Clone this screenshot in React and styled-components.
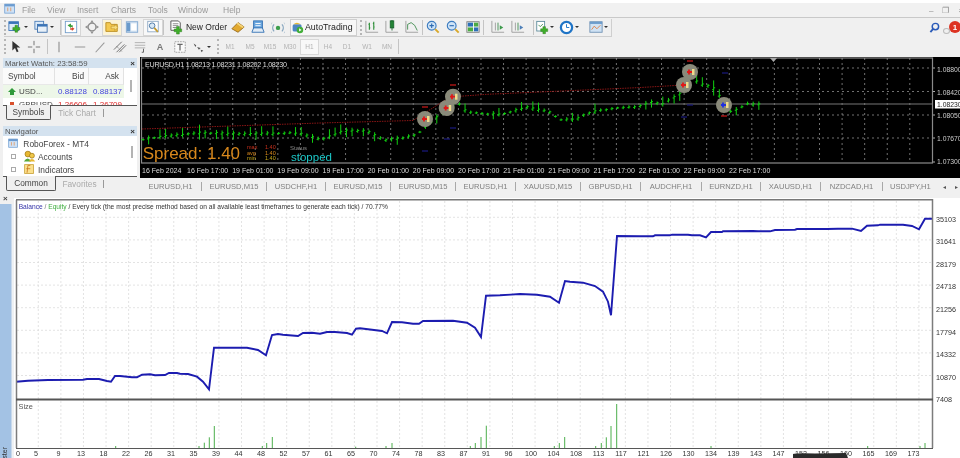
import React from "react";
import styled, { createGlobalStyle } from "styled-components";

const Global = createGlobalStyle`
  html, body { margin: 0; padding: 0; width: 960px; height: 458px; overflow: hidden; background: #f0f0f0; }
  #root { width: 960px; height: 458px; }
  * { box-sizing: border-box; }
`;

const Page = styled.div`
  width: 960px; height: 458px; overflow: hidden; display: flex; flex-direction: column;
  background: #f0f0f0; color: #333; font: 8px "Liberation Sans", Arial, sans-serif;
  filter: blur(0.3px);
`;
const MenuBar = styled.div`
  height: 18px; flex: none; display: flex; align-items: center; position: relative; padding: 2px 0 0 4px;
  background: linear-gradient(#fff 0, #fff 3px, #f1f1f1 3px); border-bottom: 1px solid #c9c9c9;
`;
const MenuItem = styled.span`
  color: #9a9a9a; font-size: 8.5px; width: ${p => p.$w}px; flex: none;
`;
const WinControls = styled.div`
  position: absolute; left: 929px; top: 6px; display: flex; gap: 9px; color: #888; font-size: 8px; white-space: nowrap;
`;
const ToolRow = styled.div`
  height: 19px; flex: none; display: flex; align-items: center; padding-left: ${p => p.$pad}px; position: relative;
`;
const ToolStrip = styled.div`
  display: flex; align-items: center; height: 18px; width: ${p => p.$w}px; flex: none;
  border-bottom: ${p => p.$line ? "1px solid #cfcfcf" : "0"}; border-right: ${p => p.$line ? "1px solid #cfcfcf" : "0"};
`;
const Tool = styled.div`
  width: ${p => p.$w || 20}px; height: 17px; flex: none; display: flex; align-items: center; justify-content: center;
  background: ${p => p.$on === "y" ? "#fbf3d6" : p.$on ? "#f8f8f8" : "transparent"};
  border: ${p => p.$on ? "1px solid #d6d6d6" : "0"};
`;
const Caret = styled.div`
  width: ${p => p.$w || 7}px; flex: none; display: flex; justify-content: center;
  &::after { content: ""; border: 2px solid transparent; border-top: 2.5px solid #333; margin-top: 2px; }
`;
const Gap = styled.div` width: ${p => p.$w}px; flex: none; `;
const Sep = styled.div` width: 1px; height: 15px; background: #c4c4c4; flex: none; `;
const Grip = styled.div` width: 2px; height: 15px; flex: none; border-left: 2px dotted #b5b5b5; `;
const OrderBtn = styled.div`
  width: 64px; flex: none; display: flex; align-items: center; gap: 2px; padding-left: 5px;
  color: #222; font-size: 8.5px; white-space: nowrap;
`;
const AutoBtn = styled.div`
  width: 67px; height: 17px; flex: none; display: flex; align-items: center; gap: 1px; padding-left: 0;
  background: #f7f7f7; border: 1px solid #cfcfcf; color: #222; font-size: 8.8px; white-space: nowrap;
`;
const Period = styled.div`
  width: ${p => p.$w || 20}px; height: 16px; flex: none; display: flex; align-items: center; justify-content: center;
  color: #b2b2b2; font-size: 6.5px; border: ${p => p.$box ? "1px solid #d8d8d8" : "0"}; background: ${p => p.$box ? "#f8f8f8" : "transparent"};
`;
const RightIcons = styled.div`
  position: absolute; right: 0; top: 1px; width: 34px; height: 17px;
`;
const Badge = styled.div`
  position: absolute; right: -1px; top: 2px; width: 12px; height: 12px; border-radius: 50%; background: #dd3322;
  color: #fff; font-size: 8px; font-weight: bold; display: flex; align-items: center; justify-content: center;
`;
const Bubble = styled.div`
  position: absolute; left: 17px; top: 9px; width: 7px; height: 6px; border: 1px solid #bbb; border-radius: 50%;
`;
const SearchIcon = styled.div` position: absolute; left: 3px; top: 3px; `;
const Work = styled.div` height: 136px; flex: none; display: flex; `;
const Sidebar = styled.div` width: 140px; flex: none; padding: 1px 3px 0; display: flex; flex-direction: column; gap: 3px; `;
const Panel = styled.div` display: flex; flex-direction: column; height: ${p => p.$h}px; flex: none; `;
const PanelHead = styled.div`
  height: 10px; flex: none; margin-top: 1px; display: flex; justify-content: space-between; align-items: center; padding: 0 2px;
  background: #d4e2ef; color: #555; font-size: 7.8px;
  & b { color: #333; font-size: 8px; }
`;
const WatchBody = styled.div`
  height: 37px; flex: none; background: #fff; overflow: hidden; display: grid; grid-template-columns: 52px 34px 35px 13px;
  grid-template-rows: 17px 13px 13px;
`;
const HeadCell = styled.div`
  background: #fafafa; border-right: ${p => p.$last ? "0" : "1px solid #e2e2e2"}; border-bottom: 1px solid #e8e8e8; color: #444; font-size: 8.3px;
  display: flex; align-items: center; justify-content: ${p => p.$left ? "flex-start" : "flex-end"}; padding: ${p => p.$left ? "0 0 0 5px" : "0 4px 0 0"};
`;
const Cell = styled.div`
  background: ${p => p.$bg || "#fff"}; color: ${p => p.$c || "#444"}; font-size: 8px;
  display: flex; align-items: center; gap: 3px; justify-content: ${p => p.$left ? "flex-start" : "flex-end"}; padding: ${p => p.$left ? "0 0 0 5px" : "0 2px 0 0"};
`;
const Scroll = styled.div`
  grid-column: 4; grid-row: 1 / 4; background: #fff; display: flex; justify-content: center; padding-top: ${p => p.$top}px;
  &::after { content: ""; width: 2px; height: 12px; background: #b3b3b3; }
`;
const TabRow = styled.div`
  height: 15px; flex: none; display: flex; align-items: stretch; border-top: 1px solid #555; padding-left: 3px; color: #a0a0a0; font-size: 8.3px;
`;
const SideTab = styled.div`
  width: ${p => p.$w}px; flex: none; display: flex; align-items: center; justify-content: center;
  color: ${p => p.$on ? "#444" : "#aaa"}; background: #f0f0f0;
  ${p => p.$on ? "border: 1px solid #555; border-top: 0; margin-top: -1px; border-radius: 0 0 2px 2px;" : ""}
`;
const TabSep = styled.div` width: 1px; height: 8px; background: #999; align-self: center; flex: none; `;
const NavBody = styled.div` height: 40px; flex: none; background: #fff; position: relative; overflow: hidden; padding: 1px 0 0 2px; `;
const TreeRow = styled.div`
  height: 13px; display: flex; align-items: center; gap: 2px; padding-left: ${p => p.$in}px; color: #444; font-size: 8.4px; white-space: nowrap;
`;
const Plus = styled.div`
  width: 5px; height: 5px; border: 1px solid #aaa; flex: none; margin-right: 5px;
`;
const NavScroll = styled.div`
  position: absolute; right: 4px; top: 10px; width: 2px; height: 12px; background: #b3b3b3;
`;
const ChartCol = styled.div` width: 820px; flex: none; padding-top: 1px; display: flex; flex-direction: column; `;
const Plot = styled.svg` width: 820px; height: 121px; display: block; flex: none; background: #000; margin-left: 0; `;
const TabBar = styled.div`
  height: 12px; margin-top: 2px; flex: none; display: flex; align-items: center; color: #808080; font-size: 7.6px; position: relative; white-space: nowrap;
`;
const SymTab = styled.div`
  width: ${p => p.$w}px; flex: none; text-align: center; border-right: 1px solid #a8a8a8; line-height: 9px; height: 9px;
`;
const Arrows = styled.div` margin-left: 12px; display: flex; gap: 9px; color: #555; font-size: 6px; `;
const Tester = styled.div` height: 266px; flex: none; display: flex; background: #f0f0f0; `;
const Strip = styled.div`
  width: 14px; flex: none; position: relative; overflow: hidden;
  background: linear-gradient(90deg, #a3c2e4 0 11px, #eef1f4 12px);
`;
const StripClose = styled.div`
  height: 12px; background: #f0f0f0; color: #444; font-size: 8px; font-weight: bold; padding: 2px 0 0 3px;
`;
const StripLabel = styled.div`
  position: absolute; left: 1px; bottom: -8px; writing-mode: vertical-rl; transform: rotate(180deg); color: #333; font-size: 7px;
`;
const Graph = styled.svg` width: 946px; height: 266px; display: block; flex: none; `;
const Tx = styled.text`
  font-family: "Liberation Sans", Arial, sans-serif; font-size: ${p => p.$s || 7.4}px; fill: ${p => p.$c || "#333"};
`;

const I = ({ children, s = 14 }) => <svg width={s} height={s} viewBox="0 0 16 16">{children}</svg>;
const PlusG = ({ x = 8, y = 8 }) => <path d={`M${x + 2} ${y}h3v2.500h2.500v3h-2.500v2.500h-3v-2.500h-2.500v-3h2.500z`} fill="#3fae2a" stroke="#2b7d1c" strokeWidth=".5" />;
const NewChart = () => <I><rect x="1" y="2" width="11" height="10" fill="#dceaf8" stroke="#3a74b8" /><rect x="1" y="2" width="11" height="2.500" fill="#3a74b8" /><PlusG x={6} y={6} /></I>;
const Profiles = () => <I><rect x="1" y="1.500" width="10" height="9" fill="#dceaf8" stroke="#4a7cb8" /><rect x="4" y="5" width="11" height="9" fill="#e8f0f8" stroke="#3a6ca8" /><rect x="4" y="5" width="11" height="2.500" fill="#3a74b8" /></I>;
const Market = () => <I><rect x="1.500" y="1.500" width="13" height="13" fill="#fff" stroke="#6f9bc8" /><path d="M4 6l4-2v2h2v2H8v1z" fill="#3a9e3a" /><path d="M12 10l-3 2.500v-1.500H7V9.500h2V8z" fill="#d8452c" /></I>;
const DataWin = () => <I><circle cx="8" cy="8" r="4.500" fill="none" stroke="#8a8a8a" strokeWidth="1.500" /><path d="M8 0l2 3H6zM8 16l2-3H6zM0 8l3-2v4zM16 8l-3-2v4z" fill="#8f8f8f" /></I>;
const Folder = () => <I><path d="M1 3h5l1 2h7v8H1z" fill="#f4c94f" stroke="#b88a1e" /><path d="M7 7h4V5l4 3.500L11 12v-2H7z" fill="#f7dd7e" stroke="#b88a1e" strokeWidth=".6" /></I>;
const Term = () => <I><rect x="1.500" y="2" width="13" height="12" fill="#d8e6f4" stroke="#7fa6cf" /><rect x="2" y="3" width="4" height="10" fill="#6a9acb" /><rect x="7" y="4" width="6" height="8" fill="#fff" /></I>;
const TesterIc = () => <I><rect x="2" y="1.500" width="12" height="12" fill="#fff" stroke="#8aa6c2" /><circle cx="7" cy="6.500" r="3.200" fill="#d8e8f6" stroke="#3e6e9e" /><path d="M9.500 9l4 4.500" stroke="#c49a2a" strokeWidth="2" /></I>;
const OrderIc = () => <I s={15}><path d="M2 1h8l2 2v8H2z" fill="#fff" stroke="#555" /><path d="M4 4h6M4 6h6M4 8h4" stroke="#888" /><PlusG x={6} y={7} /></I>;
const Gold = () => <I><path d="M1 10l7-7 7 5-7 6z" fill="#e2a92f" stroke="#96691a" /><path d="M8 3l7 5-2 1-7-5z" fill="#f4d57a" /></I>;
const Book = () => <I><rect x="3" y="1" width="10" height="9" fill="#6aa6de" stroke="#2f6eb2" /><path d="M1 14l2-5h10l2 5z" fill="#e2ecf6" stroke="#2f6eb2" /><path d="M5 4h6M5 6.500h6" stroke="#fff" /></I>;
const Signal = () => <I><circle cx="8" cy="9" r="2.500" fill="#3c9e4c" /><path d="M3.500 5a6 6 0 0 0 0 8M12.500 5a6 6 0 0 1 0 8" stroke="#8aa8c0" fill="none" strokeWidth="1.500" /><path d="M1 3a9 9 0 0 0 0 12M15 3a9 9 0 0 1 0 12" stroke="#b9c9d6" fill="none" /></I>;
const Robot = () => <I s={13}><rect x="2" y="4" width="11" height="9" rx="2" fill="#4c86c2" /><path d="M3 4q4-4 9 0z" fill="#e8b832" /><circle cx="11" cy="11" r="4" fill="#41ad38" /><path d="M10 9l3 2-3 2z" fill="#fff" /></I>;
const Bars = ({ c = "#2f8f3a" }) => <I><path d="M1 1v13h14" stroke="#999" fill="none" /><path d="M5 3v8M4 5h1M5 9h1M10 2v9M9 4h1M10 8h1" stroke={c} strokeWidth="1.300" fill="none" /></I>;
const Candle = () => <I><path d="M1 1v13h14" stroke="#999" fill="none" /><rect x="6" y="1" width="4" height="8" fill="#2e9e3e" stroke="#15602a" /><path d="M8 0v12" stroke="#15602a" /></I>;
const LineIc = () => <I><path d="M1 1v13h14" stroke="#999" fill="none" /><path d="M3 11V5l4-2 4 3 3 6" stroke="#3d8a4c" fill="none" /></I>;
const Zoom = ({ plus }) => <I><circle cx="6.500" cy="6.500" r="5" fill="#cfe4f7" stroke="#3c7cc0" strokeWidth="1.300" /><path d={plus ? "M4 6.500h5M6.500 4v5" : "M4 6.500h5"} stroke="#2d6cb4" strokeWidth="1.300" /><path d="M10.500 10.500l4 4" stroke="#d8a92c" strokeWidth="2.200" /></I>;
const Tile = () => <I><rect x="1" y="2" width="14" height="12" fill="#fff" stroke="#777" /><rect x="2" y="3" width="6" height="4.500" fill="#2c6fb6" /><rect x="9" y="3" width="5" height="4.500" fill="#4caa44" /><rect x="2" y="8.500" width="6" height="4.500" fill="#4caa44" /><rect x="9" y="8.500" width="5" height="4.500" fill="#2c6fb6" /></I>;
const Shift = ({ two }) => <I><path d="M1 1v13h14M5 3v9" stroke="#999" fill="none" /><path d="M8 3v9" stroke="#3d8a4c" /><path d="M10 6l4 2.500-4 2.500z" fill={two ? "#4d7fb8" : "#3d9a4c"} /></I>;
const AddInd = () => <I s={15}><rect x="2" y="1" width="9" height="11" fill="#fff" stroke="#5a8a9a" /><path d="M4 5l2 2 3-3" stroke="#3d8a4c" fill="none" /><PlusG x={7} y={7} /></I>;
const Clock = () => <I s={15}><circle cx="8" cy="8" r="6" fill="#fff" stroke="#1f74c6" strokeWidth="2.400" /><path d="M8 4.500V8h3" stroke="#1f74c6" fill="none" /></I>;
const Templ = () => <I><rect x="1" y="2" width="14" height="12" fill="#cfe2f4" stroke="#6c8fb2" /><rect x="1" y="2" width="14" height="2.500" fill="#6c9ccc" /><path d="M3 11l3-4 3 3 4-4" stroke="#e07a3c" fill="none" /></I>;
const Arrow = () => <I><path d="M5 1v11l3-3 2 5 2-1-2-4.500h4z" fill="#333" /></I>;
const Cross = () => <I><path d="M8 1v5M8 10v5M1 8h5M10 8h5" stroke="#666" /></I>;
const VLine = () => <I><path d="M8 2v12" stroke="#888" strokeWidth="1.200" /></I>;
const HLine = () => <I><path d="M2 8h12" stroke="#999" strokeWidth="1.200" /></I>;
const Trend = () => <I><path d="M3 14L13 3" stroke="#999" strokeWidth="1.200" /></I>;
const Channel = () => <I><path d="M1 11l9-9M4 14l9-9M7 14l8-8" stroke="#666" /><path d="M4 7l6 6" stroke="#666" strokeDasharray="1 1" /></I>;
const Fibo = () => <I><path d="M2 3h12M2 6h12M2 9h12" stroke="#aaa" /><path d="M12 10v4h-2" stroke="#555" fill="none" /></I>;
const AIcon = () => <span style={{ color: "#777", fontWeight: 700, fontSize: 9 }}>A</span>;
const TIcon = () => <I><rect x="2" y="2" width="12" height="12" fill="#fafafa" stroke="#999" strokeDasharray="2 1" /><path d="M5 5h6M8 5v7" stroke="#666" strokeWidth="1.400" /></I>;
const MoreArrows = () => <I><path d="M3 4l3 2-1 2zM7 8l4 1-2 2zM11 11l3 1-2 2z" fill="#555" /></I>;
const AppIcon = ({ s = 11 }) => <I s={s}><rect x="1" y="1.500" width="13" height="12" fill="#cfe2f6" stroke="#6b9bd0" /><rect x="1" y="1.500" width="13" height="3" fill="#6b9bd0" /><path d="M5 6v5M9 6v5" stroke="#e08a4a" /></I>;
const Acct = () => <I s={13}><circle cx="6" cy="5" r="3.500" fill="#e8b832" stroke="#a87f1a" /><path d="M1 14q5-7 9 0z" fill="#58a83a" /><circle cx="11" cy="7" r="3" fill="#f0c84a" stroke="#a87f1a" /><path d="M7 14q4-6 8 0z" fill="#e8b832" /></I>;
const Indic = () => <I s={13}><rect x="2" y="2" width="11" height="11" fill="#fbe08c" stroke="#c9a23a" /><path d="M9 3H6l-1 9M4 7h5" stroke="#c9781e" fill="none" /></I>;

const timeLabels = ["16 Feb 17:00","19 Feb 01:00","19 Feb 09:00","19 Feb 17:00","20 Feb 01:00","20 Feb 09:00","20 Feb 17:00","21 Feb 01:00","21 Feb 09:00","21 Feb 17:00","22 Feb 01:00","22 Feb 09:00","22 Feb 17:00"];
const key = [[141,140],[165,136],[200,133],[240,134],[300,133],[320,140],[343,131],[367,131],[377,137],[385,140],[403,138],[418,134],[425,127],[435,119],[447,109],[453,100],[458,103],[467,112],[487,114],[503,114],[527,107],[550,112],[560,120],[577,119],[587,113],[603,110],[617,108],[637,107],[653,102],[663,104],[673,98],[683,92],[690,75],[700,84],[710,86],[718,92],[723,105],[730,112],[737,110],[747,104],[763,105]];
const levelAt = x => {
  for (let i = 1; i < key.length; i++) if (x <= key[i][0]) {
    const [a, b] = key[i - 1], [c, d] = key[i];
    return b + (d - b) * (x - a) / (c - a);
  }
  return 105;
};
const candles = [];
for (let x = 143, i = 0; x < 764; x += 5.65, i++) {
  const n = Math.sin(i * 12.9898) * 43758.5453, r = n - Math.floor(n);
  const n2 = Math.sin(i * 78.233) * 12543.123, r2 = n2 - Math.floor(n2);
  const y = levelAt(x), h = 1 + r * 2.5;
  candles.push({ x, t: y - h - (r2 > .7 ? 5 : 0), b: y + 1 + r2 * 2 + (r > .75 ? 4 : 0), o: y + r2, c: y - r });
}

const markers = [[425,119,"#e01818"],[446.700,108,"#e01818"],[453,96.700,"#e01818"],[690,72,"#e01818"],[684,85,"#e01818"],[724,105,"#1f2fe0"]];
const redDash = [[425,107],[453,85],[690,61],[724,116]];
const blueDash = [[425,151],[447,139],[453,128],[690,105],[684,117],[725,73]];
const vGrid = Array.from({ length: 34 }, (_, i) => 165 + 22.57 * i);

const ChartPlot = () => (
  <Plot viewBox="140 57 820 121">
    <rect x="141.500" y="58" width="791" height="105" fill="none" stroke="#8a8a8a" strokeWidth="1.200" />
    <g stroke="#bdbdbd" strokeDasharray="2 3" strokeWidth=".8" opacity=".75">
      {vGrid.map(x => <path key={x} d={`M${x} 58V163`} />)}
      {[68, 91.500, 115, 138].map(y => <path key={y} d={`M142 ${y}H932`} />)}
    </g>
    <path d="M142 104H932" stroke="#777" strokeWidth="1.200" />
    <path d="M142 129L320 123L413 120.500L450 97L487 94.300L637 87.700L684 85" fill="none" stroke="#8a1515" strokeDasharray="1.500 1" />
    <g stroke="#10d010" strokeWidth="1" fill="none">
      {candles.map(c => <path key={c.x} d={`M${c.x} ${c.t}V${c.b}M${c.x - 1.500} ${c.o}H${c.x}M${c.x} ${c.c}H${c.x + 1.500}`} />)}
    </g>
    {redDash.map(([x, y]) => <path key={x} d={`M${x - 3} ${y}h6`} stroke="#d01818" strokeWidth="1.200" />)}
    {blueDash.map(([x, y]) => <path key={x + "b"} d={`M${x - 3} ${y}h6`} stroke="#1a1a80" strokeWidth="1.200" />)}
    {markers.map(([x, y, c]) => (
      <g key={x}>
        <circle cx={x} cy={y} r="8" fill="#8a8a7a" />
        <path d={`M${x - 3} ${y}h5M${x - 1} ${y - 2.500}v5`} stroke={c} strokeWidth="1.800" />
        <rect x={x + 2} y={y - 3} width="2.500" height="6" fill="#efdc8c" />
      </g>
    ))}
    <path d="M770 58h7l-3.500 4z" fill="#aaa" />
    <Tx x="145" y="66.500" $c="#ddd" $s={7.2} textLength="142">EURUSD,H1  1.08213 1.08231 1.08202 1.08230</Tx>
    <Tx x="142.700" y="159" $c="#d8881c" $s={17}>Spread: 1.40</Tx>
    <Tx x="247" y="149" $c="#c8301c" $s={5.500}>max</Tx><Tx x="265" y="149" $c="#c8301c" $s={5.500}>1.40</Tx>
    <Tx x="247" y="154.500" $c="#d8881c" $s={5.500}>avg</Tx><Tx x="265" y="154.500" $c="#d8881c" $s={5.500}>1.40</Tx>
    <Tx x="247" y="160" $c="#c8a81c" $s={5.500}>min</Tx><Tx x="265" y="160" $c="#c8a81c" $s={5.500}>1.40</Tx>
    <Tx x="290" y="149.500" $c="#888" $s={6}>Status</Tx>
    <Tx x="291" y="161" $c="#1cc8c8" $s={11.500}>stopped</Tx>
    <Tx x="142" y="172.500" $c="#ddd" $s={7}>16 Feb 2024</Tx>
    {timeLabels.map((t, i) => <Tx key={t} x={187 + 45.17 * i} y="172.500" $c="#ddd" $s={7}>{t}</Tx>)}
    {[68, 91.500, 115, 138, 162].map(y => <path key={y} d={`M933 ${y}h2`} stroke="#aaa" />)}
    <Tx x="937" y="71.500" $c="#ccc" $s={6.800}>1.08800</Tx>
    <Tx x="937" y="94.500" $c="#ccc" $s={6.800}>1.08420</Tx>
    <rect x="935" y="100" width="25" height="8.500" fill="#fff" />
    <Tx x="937" y="107" $c="#222" $s={6.800}>1.08230</Tx>
    <Tx x="937" y="117.500" $c="#ccc" $s={6.800}>1.08050</Tx>
    <Tx x="937" y="141" $c="#ccc" $s={6.800}>1.07670</Tx>
    <Tx x="937" y="164" $c="#ccc" $s={6.800}>1.07300</Tx>
  </Plot>
);

const curve = "16,381.700 28,380.700 48,380 83,379.700 87,379 99,379 107,381 111,381.700 115,376 120,376 132,377.300 137,377.300 142,374.700 150,374.300 155,375.300 165,375 169,373 177,373 180,373.700 188,374 197,376.700 203,381.700 209,389.300 214,347.700 247,347.700 258,350 266,355.300 272,335 278,334 283,334.700 298,336 303,333 312,332.700 320,333.700 327,332 335,332 347,333 352,334.700 356,328.700 360,328.300 382,331 387,333.300 392,322 402,322.300 413,323.700 419,323.700 423,321 453,320.700 467,322.700 475,327.700 481,337 486,295.700 500,295.300 520,294 537,294.700 550,296.700 559,302.700 565,281 570,281.700 583,282.700 595,286 603,291.700 608,301.700 611,315.300 617,236 640,236.300 653,236.300 655,235.300 670,235.300 672,234.700 688,234.700 692,235.300 700,235.300 706,237.300 711,232 722,232 723,231.300 753,231 758,231.300 770,231.300 775,230 795,229.700 797,229 820,229 827,229 838,228.700 852,228.700 861,231 867,225.700 878,225.300 880,224.700 903,224.700 912,226 919,229.300 925,218.700 932,218.700";
const bars = [[115.700,446],[199,446],[204.300,442.700],[209.300,437.300],[214.300,426],[262.300,446],[266.700,443],[272.300,437],[355.700,446.700],[386,446],[392,443],[470.300,446],[475.300,443],[481,437],[486.300,425.700],[554.300,446],[559.300,443],[564.700,437],[595.700,446],[601.300,443],[606.300,437.300],[611,426],[616.700,404],[711,446],[867.700,446],[920,446],[925,443]];
const xLabels = "0 5 9 13 18 22 26 31 35 39 44 48 52 57 61 65 70 74 78 83 87 91 96 100 104 108 113 117 121 126 130 134 139 143 147 152 156 160 165 169 173".split(" ");
const yLabels = ["35103","31641","28179","24718","21256","17794","14332","10870","7408"];

const TesterGraph = () => (
  <Graph viewBox="14 192 946 266">
    <rect x="14" y="198" width="946" height="260" fill="#fff" />
    <rect x="14" y="192" width="946" height="6" fill="#f0f0f0" />
    <g stroke="#dcdcdc" strokeDasharray="2 2" strokeWidth=".8">
      {Array.from({ length: 40 }, (_, i) => 38.300 + 22.58 * i).map(x => <path key={x} d={`M${x} 201V448`} />)}
      {Array.from({ length: 8 }, (_, i) => 217.300 + 22.6 * i).map(y => <path key={y} d={`M17 ${y}H932`} />)}
    </g>
    <polyline points={curve} fill="none" stroke="#1c1cb0" strokeWidth="1.900" />
    <g strokeWidth="1" stroke="#4cae4c">
      {bars.map(([x, y]) => <path key={x} d={`M${x} ${y}V448`} />)}
    </g>
    <path d="M16.500 200V448M932.500 199V448" stroke="#7c7c7c" strokeWidth="1.500" fill="none" />
    <path d="M16 199.800H933" stroke="#777" strokeWidth="1.500" />
    <path d="M16 399.500H933" stroke="#555" strokeWidth="2.200" />
    <path d="M16 448.500H933" stroke="#444" strokeWidth=".9" />
    <Tx x="18.700" y="208.500" $s={6.650}>
      <tspan fill="#3232a8">Balance</tspan><tspan fill="#777"> / </tspan><tspan fill="#3fae3f">Equity</tspan><tspan> / Every tick (the most precise method based on all available least timeframes to generate each tick) / 70.77%</tspan>
    </Tx>
    <Tx x="18.500" y="409" $c="#555">Size</Tx>
    {yLabels.map((t, i) => <Tx key={t} x="936" y={221.500 + 22.6 * i} $c="#333" $s={7.200}>{t}</Tx>)}
    {xLabels.map((t, i) => <Tx key={t} x={i === 0 ? 18 : 13.500 + 22.5 * i} y="456" textAnchor="middle" $c="#333" $s={7.200}>{t}</Tx>)}
    <path d="M793 458V454Q795 453 815 453.500L846 453L848 458z" fill="#2a2a2a" />
  </Graph>
);

const tabs = [["EURUSD,H1",62],["EURUSD,M15",65],["USDCHF,H1",59],["EURUSD,M15",65],["EURUSD,M15",65],["EURUSD,H1",60],["XAUUSD,M15",65],["GBPUSD,H1",60],["AUDCHF,H1",61],["EURNZD,H1",59],["XAUUSD,H1",60],["NZDCAD,H1",62]];

export default function App() {
  return (
    <Page>
      <Global />
      <MenuBar>
        <MenuItem $w={18}><AppIcon s={12} /></MenuItem>
        <MenuItem $w={25}>File</MenuItem><MenuItem $w={30}>View</MenuItem><MenuItem $w={34}>Insert</MenuItem>
        <MenuItem $w={37}>Charts</MenuItem><MenuItem $w={30}>Tools</MenuItem><MenuItem $w={45}>Window</MenuItem><MenuItem $w={30}>Help</MenuItem>
        <WinControls><span>–</span><span>❐</span><span>×</span></WinControls>
      </MenuBar>
      <ToolRow $pad={4}>
        <ToolStrip $w={608} $line>
          <Grip /><Gap $w={2} />
          <Tool $w={14}><NewChart /></Tool><Caret />
          <Gap $w={5} />
          <Tool $w={14}><Profiles /></Tool><Caret />
          <Gap $w={5} /><Sep />
          <Tool $w={20.400} $on><Market /></Tool>
          <Tool $w={20.400}><DataWin /></Tool>
          <Tool $w={20.400} $on="y"><Folder /></Tool>
          <Tool $w={20.400}><Term /></Tool>
          <Tool $w={20.400} $on><TesterIc /></Tool>
          <Sep />
          <OrderBtn><OrderIc />New Order</OrderBtn>
          <Tool><Gold /></Tool><Tool><Book /></Tool><Tool><Signal /></Tool>
          <Gap $w={2} />
          <AutoBtn><Robot />AutoTrading</AutoBtn>
          <Gap $w={3} /><Grip />
          <Tool><Bars /></Tool><Tool><Candle /></Tool><Tool><LineIc /></Tool>
          <Sep />
          <Tool><Zoom plus /></Tool><Tool><Zoom /></Tool><Tool><Tile /></Tool>
          <Sep />
          <Gap $w={4} /><Tool><Shift /></Tool><Tool><Shift two /></Tool>
          <Gap $w={5} /><Sep />
          <Gap $w={1} />
          <Tool $w={14}><AddInd /></Tool><Caret $w={6} />
          <Gap $w={4} />
          <Tool $w={15}><Clock /></Tool><Caret />
          <Gap $w={8} />
          <Tool $w={14}><Templ /></Tool><Caret />
        </ToolStrip>
        <RightIcons>
          <SearchIcon><svg width="11" height="11" viewBox="0 0 12 12"><circle cx="7" cy="5" r="3.500" fill="none" stroke="#2a5ab8" strokeWidth="1.600" /><path d="M4.500 7.500L1.500 11" stroke="#2a5ab8" strokeWidth="2" /></svg></SearchIcon>
          <Bubble />
          <Badge>1</Badge>
        </RightIcons>
      </ToolRow>
      <ToolRow $pad={4}>
        <Grip />
        <Tool $w={18}><Arrow /></Tool>
        <Tool><Cross /></Tool>
        <Gap $w={3} /><Sep />
        <Tool $w={22}><VLine /></Tool><Tool><HLine /></Tool><Tool><Trend /></Tool><Tool><Channel /></Tool><Tool><Fibo /></Tool>
        <Tool><AIcon /></Tool><Tool><TIcon /></Tool><Tool $w={16}><MoreArrows /></Tool><Caret $w={6} />
        <Gap $w={5} /><Grip /><Gap $w={1} />
        <Period>M1</Period><Period>M5</Period><Period>M15</Period><Period>M30</Period>
        <Period $w={19} $box>H1</Period>
        <Period $w={18}>H4</Period><Period>D1</Period><Period>W1</Period><Period>MN</Period>
        <Gap $w={1} /><Sep />
      </ToolRow>
      <Work>
        <Sidebar>
          <Panel $h={65}>
            <PanelHead><span>Market Watch: 23:58:59</span><b>×</b></PanelHead>
            <WatchBody>
              <HeadCell $left>Symbol</HeadCell><HeadCell>Bid</HeadCell><HeadCell>Ask</HeadCell>
              <Scroll $top={12} />
              <Cell $left $bg="#edf7e8"><svg width="8" height="8" viewBox="0 0 8 8"><path d="M4 0l4 4H6v3H2V4H0z" fill="#2f9a3a" /></svg>USD...</Cell>
              <Cell $bg="#edf7e8" $c="#4444dd">0.88128</Cell><Cell $bg="#edf7e8" $c="#4444dd">0.88137</Cell>
              <Cell $left><svg width="8" height="8" viewBox="0 0 8 8"><path d="M4 8l4-4H6V1H2v3H0z" fill="#d8502c" /></svg>GBPUSD</Cell>
              <Cell $c="#e02a2a">1.26606</Cell><Cell $c="#e02a2a">1.26709</Cell>
            </WatchBody>
            <TabRow>
              <SideTab $on $w={45}>Symbols</SideTab>
              <SideTab $w={52}>Tick Chart</SideTab><TabSep />
            </TabRow>
          </Panel>
          <Panel $h={68}>
            <PanelHead><span>Navigator</span><b>×</b></PanelHead>
            <NavBody>
              <TreeRow $in={3}><AppIcon /><span>&nbsp;RoboForex - MT4</span></TreeRow>
              <TreeRow $in={6}><Plus /><Acct /><span>Accounts</span></TreeRow>
              <TreeRow $in={6}><Plus /><Indic /><span>Indicators</span></TreeRow>
              <NavScroll />
            </NavBody>
            <TabRow>
              <SideTab $on $w={50}>Common</SideTab>
              <SideTab $w={47}>Favorites</SideTab><TabSep />
            </TabRow>
          </Panel>
        </Sidebar>
        <ChartCol>
          <ChartPlot />
          <TabBar>
            {tabs.map(([t, w], i) => <SymTab key={i} $w={w}>{t}</SymTab>)}
            <Gap $w={7} /><span>USDJPY,H1</span>
            <Arrows><span>◂</span><span>▸</span></Arrows>
          </TabBar>
        </ChartCol>
      </Work>
      <Tester>
        <Strip><StripClose>×</StripClose><StripLabel>Tester</StripLabel></Strip>
        <TesterGraph />
      </Tester>
    </Page>
  );
}
